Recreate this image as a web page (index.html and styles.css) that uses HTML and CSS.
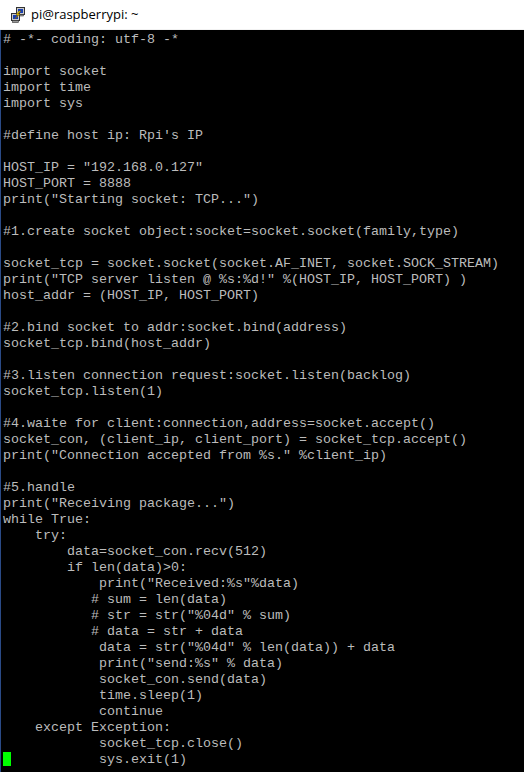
FILE: index.html
```html
<!DOCTYPE html>
<html>
<head>
<meta charset="utf-8">
<link rel="stylesheet" href="styles.css">
</head>
<body>
<div class="window">
  <div class="titlebar">
    <svg class="app-icon" width="16" height="16" viewBox="0 0 16 16">
      <rect x="6.5" y="0.5" width="8" height="7" fill="#c8c8c8" stroke="#333"/>
      <rect x="8" y="2" width="5" height="4" fill="#1a40b0"/>
      <rect x="7.5" y="7.5" width="6" height="1.5" fill="#999" stroke="#333" stroke-width="0.6"/>
      <rect x="1.5" y="6.5" width="8" height="7" fill="#c8c8c8" stroke="#333"/>
      <rect x="3" y="8" width="5" height="4" fill="#1a40b0"/>
      <rect x="2.5" y="13.5" width="6" height="2" fill="#999" stroke="#333" stroke-width="0.6"/>
      <path d="M9 4 L6 8 L8 8 L5 12 L10 7 L8 7 L11 4 Z" fill="#f4d000" stroke="#7a5a00" stroke-width="0.5"/>
    </svg>
    <span class="title">pi@raspberrypi: ~</span>
  </div>
  <div class="terminal"><pre class="code"># -*- coding: utf-8 -*

import socket
import time
import sys

#define host ip: Rpi's IP

HOST_IP = "192.168.0.127"
HOST_PORT = 8888
print("Starting socket: TCP...")

#1.create socket object:socket=socket.socket(family,type)

socket_tcp = socket.socket(socket.AF_INET, socket.SOCK_STREAM)
print("TCP server listen @ %s:%d!" %(HOST_IP, HOST_PORT) )
host_addr = (HOST_IP, HOST_PORT)

#2.bind socket to addr:socket.bind(address)
socket_tcp.bind(host_addr)

#3.listen connection request:socket.listen(backlog)
socket_tcp.listen(1)

#4.waite for client:connection,address=socket.accept()
socket_con, (client_ip, client_port) = socket_tcp.accept()
print("Connection accepted from %s." %client_ip)

#5.handle
print("Receiving package...")
while True:
    try:
        data=socket_con.recv(512)
        if len(data)&gt;0:
            print("Received:%s"%data)
           # sum = len(data)
           # str = str("%04d" % sum)
           # data = str + data
            data = str("%04d" % len(data)) + data
            print("send:%s" % data)
            socket_con.send(data)
            time.sleep(1)
            continue
    except Exception:
            socket_tcp.close()
<span class="cursor"></span>           sys.exit(1)</pre></div>
</div>
</body>
</html>
```
FILE: styles.css
```css
html, body {
  margin: 0;
  padding: 0;
  background: #000;
}
.window {
  width: 524px;
  height: 772px;
  display: flex;
  flex-direction: column;
  overflow: hidden;
}
.titlebar {
  height: 30px;
  flex: none;
  background: #fff;
  display: flex;
  align-items: center;
  padding-left: 10px;
  box-sizing: border-box;
  border-bottom: 1px solid #f2f2f2;
}
.app-icon {
  display: block;
  margin-right: 5px;
}
.title {
  font-family: "Open Sans", "Noto Sans", sans-serif;
  font-size: 13px;
  color: #000;
  position: relative;
  top: -1px;
}
.terminal {
  flex: 1;
  background: #000;
  border-left: 1px solid #2a4a86;
  padding-left: 2px;
  padding-top: 2px;
}
.code {
  margin: 0;
  font-family: "Liberation Mono", "Courier New", monospace;
  font-size: 13.33px;
  line-height: 16px;
  color: #bcbcbc;
  white-space: pre;
}
.cursor {
  display: inline-block;
  width: 8px;
  height: 14px;
  background: #00ff00;
  vertical-align: -3px;
}
```
